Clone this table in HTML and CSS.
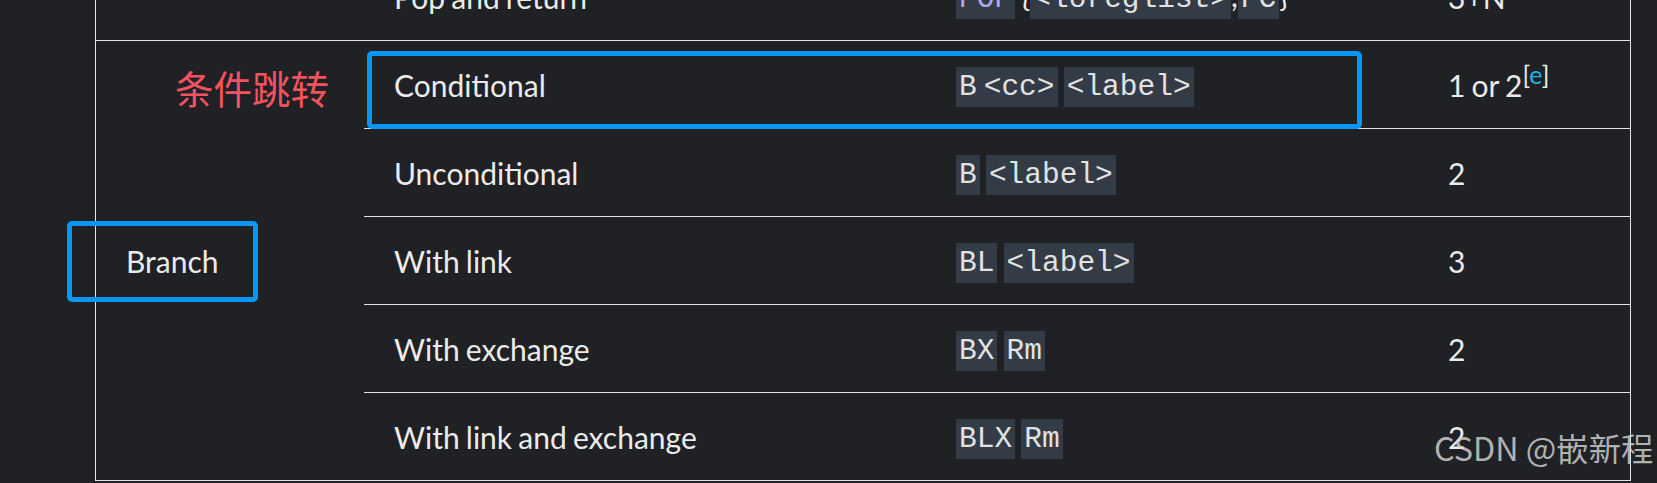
FILE: index.html
```html
<!DOCTYPE html>
<html lang="en">
<head>
<meta charset="utf-8">
<title>Branch instructions</title>
<link rel="stylesheet" href="styles.css">
</head>
<body>
<div class="page">
  <table class="tbl">
    <colgroup>
      <col class="c1"><col class="c2"><col class="c3"><col class="c4">
    </colgroup>
    <tr>
      <td></td>
      <td>Pop and return</td>
      <td><code class="lk">POP</code> {<code>&lt;loreglist&gt;</code>,<code>PC</code>}</td>
      <td>3+N<sup>[<span class="ref">d</span>]</sup></td>
    </tr>
    <tr>
      <td rowspan="5" class="grp">Branch</td>
      <td>Conditional</td>
      <td><code>B<span class="gap"></span>&lt;cc&gt;</code> <code>&lt;label&gt;</code></td>
      <td>1 or 2<sup>[<span class="ref">e</span>]</sup></td>
    </tr>
    <tr>
      <td>Unconditional</td>
      <td><code>B</code> <code>&lt;label&gt;</code></td>
      <td>2</td>
    </tr>
    <tr>
      <td>With link</td>
      <td><code>BL</code> <code>&lt;label&gt;</code></td>
      <td>3</td>
    </tr>
    <tr>
      <td>With exchange</td>
      <td><code>BX</code> <code>Rm</code></td>
      <td>2</td>
    </tr>
    <tr>
      <td>With link and exchange</td>
      <td><code>BLX</code> <code>Rm</code></td>
      <td>2</td>
    </tr>
  </table>
  <div class="note-cn">条件跳转</div>
  <div class="box box-cond"></div>
  <div class="box box-branch"></div>
  <div class="wm">CSDN @嵌新程</div>
</div>
</body>
</html>
```

FILE: styles.css
```css
html, body {
  margin: 0;
  padding: 0;
  background: #202124;
}
body {
  overflow: hidden;
}
.page {
  position: relative;
  width: 1657px;
  height: 483px;
  overflow: hidden;
  background: #202124;
  font-family: Lato, "Noto Sans", sans-serif;
  color: #ebebeb;
}
.tbl {
  margin-top: -47px;
  margin-left: 95px;
  width: 1536px;
  table-layout: fixed;
  border-collapse: separate;
  border-spacing: 0;
  border-left: 1px solid #e4e4e4;
  border-right: 1px solid #e4e4e4;
  font-size: 30px;
  word-spacing: -1.5px;
}
.c1 { width: 268px; }
.c2 { width: 562px; }
.c3 { width: 492px; }
.c4 { width: 212px; }
.tbl td {
  height: 87px;
  padding: 0 0 0 30px;
  border-bottom: 1px solid #e4e4e4;
  vertical-align: middle;
  white-space: nowrap;
}
.tbl td:nth-child(n+2) {
  padding-left: 30px;
}
.tbl code {
  font-family: "Liberation Mono", "Courier New", monospace;
  font-size: 29.5px;
  word-spacing: 0;
  background: #333c46;
  color: #e2e2e2;
  padding: 3px 3px;
}
.tbl code.lk {
  color: #b3a6ee;
}
.gap {
  display: inline-block;
  width: 7px;
}
.tbl sup {
  font-size: 25px;
  vertical-align: 13px;
  line-height: 0;
}
.ref {
  color: #19b6e6;
}
.note-cn {
  position: absolute;
  left: 175px;
  top: 63px;
  font-family: "Noto Sans CJK SC", sans-serif;
  font-size: 38.5px;
  line-height: 48px;
  color: #f3525f;
}
.box {
  position: absolute;
  border: 5px solid #0897f4;
  border-radius: 5px;
  box-sizing: border-box;
}
.box-cond {
  left: 367px;
  top: 51px;
  width: 995px;
  height: 78px;
}
.box-branch {
  left: 67px;
  top: 221px;
  width: 191px;
  height: 81px;
}
.wm {
  position: absolute;
  left: 1434px;
  top: 427px;
  font-family: "Noto Sans CJK SC", sans-serif;
  font-size: 32.3px;
  line-height: 40px;
  color: rgba(218, 218, 218, 0.78);
  white-space: nowrap;
}
```
